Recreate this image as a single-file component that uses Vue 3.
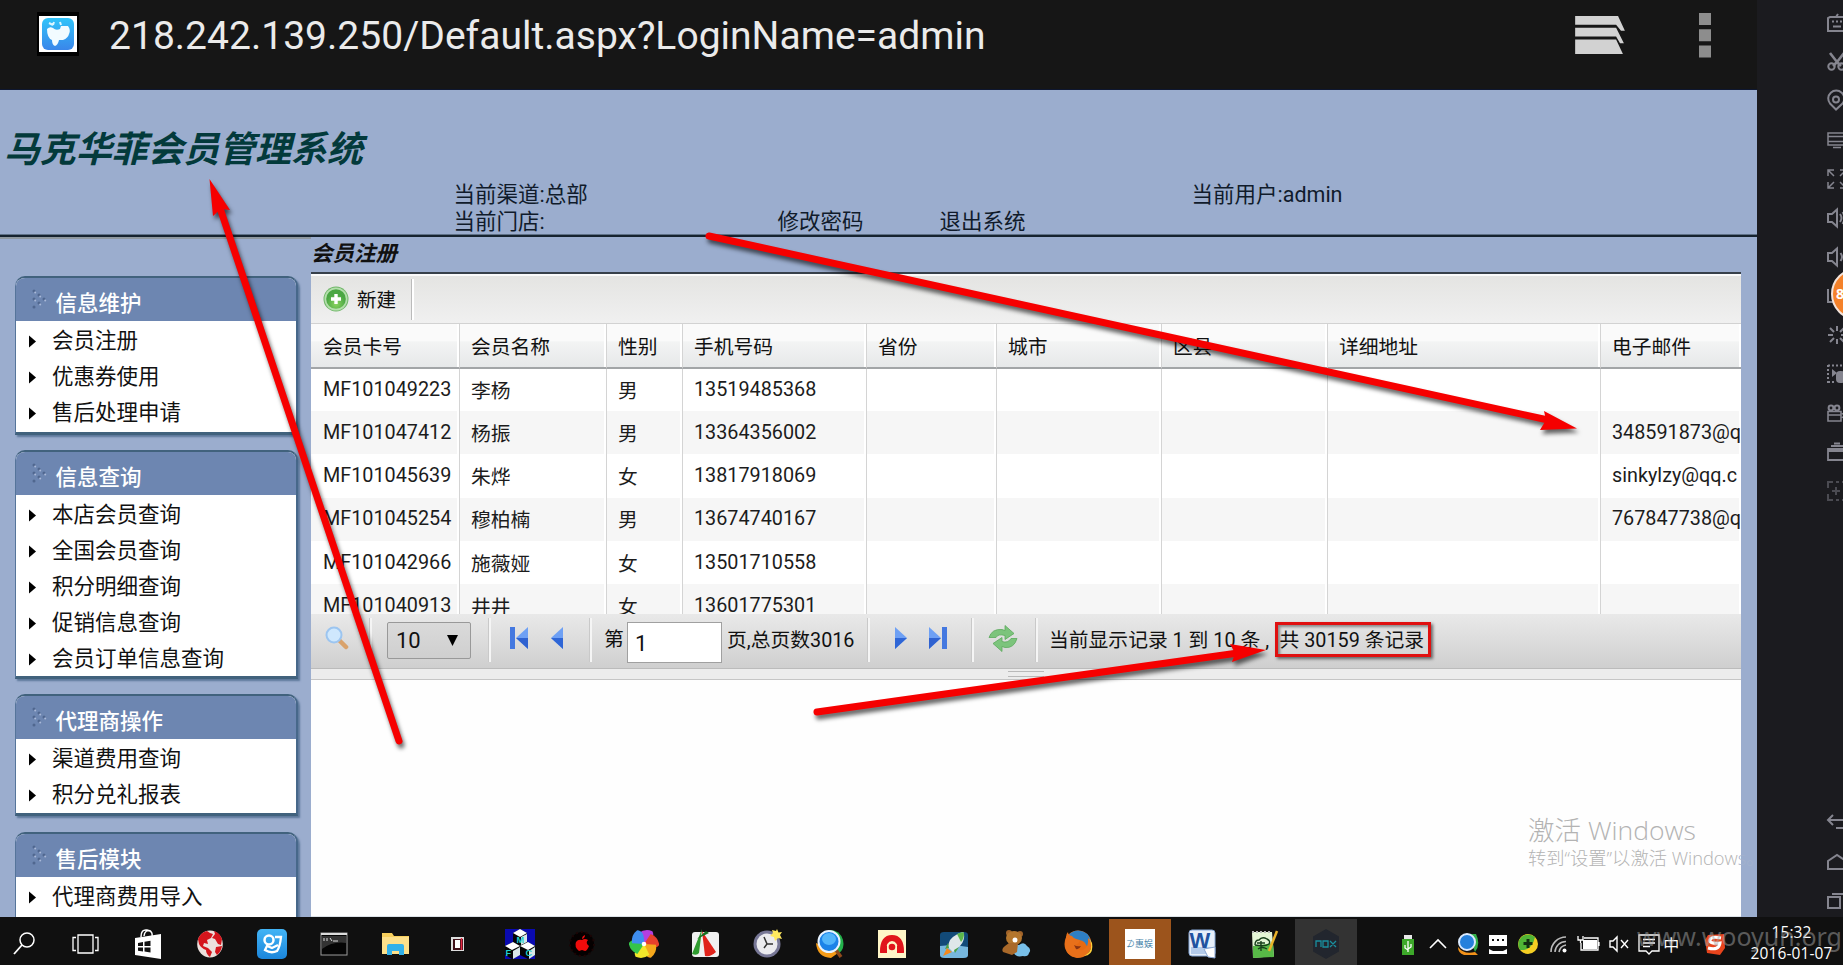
<script setup>
const panels = [
  { title: '信息维护', cls: 'p-one', items: ['会员注册', '优惠券使用', '售后处理申请'] },
  { title: '信息查询', cls: 'p-two', items: ['本店会员查询', '全国会员查询', '积分明细查询', '促销信息查询', '会员订单信息查询'] },
  { title: '代理商操作', cls: 'p-three', items: ['渠道费用查询', '积分兑礼报表'] },
  { title: '售后模块', cls: 'p-four', items: ['代理商费用导入'] },
]
const columns = ['会员卡号', '会员名称', '性别', '手机号码', '省份', '城市', '区县', '详细地址', '电子邮件']
const rows = [
  ['MF101049223', '李杨', '男', '13519485368', '', '', '', '', ''],
  ['MF101047412', '杨振', '男', '13364356002', '', '', '', '', '348591873@q'],
  ['MF101045639', '朱烨', '女', '13817918069', '', '', '', '', 'sinkylzy@qq.c'],
  ['MF101045254', '穆柏楠', '男', '13674740167', '', '', '', '', '767847738@q'],
  ['MF101042966', '施薇娅', '女', '13501710558', '', '', '', '', ''],
  ['MF101040913', '井井', '女', '13601775301', '', '', '', '', ''],
]
const petals = ['#b43fe0', '#e8402c', '#f5a81c', '#f3e72a', '#35c44a', '#3f8ef0']
</script>

<template>
  <div class="screen">
    <div class="main">
      <div class="device">
        <header class="urlbar">
          <svg class="favicon" viewBox="0 0 42 44">
            <rect width="42" height="44" fill="#000" />
            <rect x="2" y="4" width="38" height="36" fill="#fff" />
            <rect x="5" y="6" width="32" height="32" rx="6" fill="url(#fav)" />
            <defs><linearGradient id="fav" x2="0" y2="1"><stop offset="0" stop-color="#30c4fa" /><stop offset="1" stop-color="#3a86ea" /></linearGradient></defs>
            <path d="M10 17q3-3 6-1 3 3 7 1l1-3 7 0q3 4 1 8-1 4-6 6l-4 0q-1 5-4 6-3-1-3-6-5-2-5-11z" fill="#f2fbff" />
            <path d="M12 11l4 2M17 10l-1 3M23 10l1 3" stroke="#d9f5ff" stroke-width="2" />
          </svg>
          <span class="url">218.242.139.250/Default.aspx?LoginName=admin</span>
          <svg class="tabs" viewBox="0 0 52 40">
            <path d="M0 0H44L51 15H47L42 9H0zM0 12H42L50 28H46L42 21H0zM0 24H42L49 39H0z" fill="#d2d2d2" />
          </svg>
          <svg class="dots" viewBox="0 0 12 45"><path d="M0 0h12v12H0zM0 16.300h12v12H0zM0 32.500h12v12H0z" fill="#8d8d8d" /></svg>
        </header>

        <section class="banner">
          <h1>马克华菲会员管理系统</h1>
          <div class="info">
            <span>当前渠道:总部</span><span></span><span></span><span>当前用户:admin</span>
            <span>当前门店:</span><span>修改密码</span><span>退出系统</span><span></span>
          </div>
        </section>

        <div class="body">
          <aside class="side">
            <div v-for="p in panels" :key="p.title" class="panel" :class="p.cls">
              <div class="phead">
                <svg viewBox="0 0 15 20"><g fill="#50678f"><circle cx="2" cy="2" r="1.500" /><circle cx="2" cy="10" r="1.500" /><circle cx="2" cy="18" r="1.500" /><circle cx="7" cy="6" r="1.500" /><circle cx="7" cy="14" r="1.500" /><circle cx="12" cy="10" r="1.500" /></g><g fill="#a9b9d8"><circle cx="3.200" cy="3.500" r="1" /><circle cx="3.200" cy="11.500" r="1" /><circle cx="8.200" cy="7.500" r="1" /><circle cx="8.200" cy="15.500" r="1" /><circle cx="13.200" cy="11.500" r="1" /></g></svg>
                {{ p.title }}
              </div>
              <ul><li v-for="i in p.items" :key="i"><svg viewBox="0 0 8 12"><path d="M1 0L8 6L1 12z" /></svg>{{ i }}</li></ul>
            </div>
          </aside>

          <main class="content">
            <h2>会员注册</h2>
            <div class="toolbar">
              <svg class="plus" viewBox="0 0 26 26">
                <defs><radialGradient id="gp" cy=".75"><stop offset="0" stop-color="#8ad35f" /><stop offset="1" stop-color="#4ba744" /></radialGradient></defs>
                <circle cx="13" cy="13" r="12.500" fill="#6fb668" /><circle cx="13" cy="13" r="11.500" fill="#b5dfad" /><circle cx="13" cy="13" r="9.800" fill="url(#gp)" />
                <path d="M13 8v10M8 13h10" stroke="#fff" stroke-width="3.400" />
              </svg>
              <span>新建</span><i></i>
            </div>
            <div class="grid ghead"><div v-for="c in columns" :key="c">{{ c }}</div></div>
            <div class="rows">
              <div v-for="r in rows" :key="r[0]" class="grid row"><div v-for="(c, k) in r" :key="k">{{ c }}</div></div>
            </div>
            <div class="pager">
              <svg class="mag" viewBox="0 0 24 24">
                <path d="M14 14l7 7" stroke="#d9a26b" stroke-width="4.500" stroke-linecap="round" />
                <circle cx="9" cy="9" r="7.500" fill="#cfe8fd" stroke="#9cc5f0" stroke-width="2" />
              </svg>
              <i class="s1"></i>
              <div class="select"><span>10</span><svg viewBox="0 0 11 11"><path d="M0 0H11L5.500 11z" /></svg></div>
              <i class="s2"></i>
              <svg class="first" viewBox="0 0 20 22"><path d="M1 0h5v22H1z" fill="#4478e0" /><path d="M19 0v22L7 11z" fill="#6ea0f4" /><path d="M19 11v11L7 11z" fill="#2f62d0" /></svg>
              <svg class="prev" viewBox="0 0 12 22"><path d="M12 0v22L0 11z" fill="#6ea0f4" /><path d="M12 11v11L0 11z" fill="#2f66d6" /></svg>
              <i class="s3"></i>
              <span class="di">第</span><div class="pnum">1</div><span class="total">页,总页数3016</span>
              <i class="s4"></i>
              <svg class="next" viewBox="0 0 12 22"><path d="M0 0v22L12 11z" fill="#6ea0f4" /><path d="M0 11v11L12 11z" fill="#2f66d6" /></svg>
              <svg class="last" viewBox="0 0 20 22"><path d="M13 0h5v22h-5z" fill="#4478e0" /><path d="M0 0v22L12 11z" fill="#6ea0f4" /><path d="M0 11v11L12 11z" fill="#2f62d0" /></svg>
              <i class="s5"></i>
              <svg class="refresh" viewBox="0 0 30 26">
                <path d="M1 12Q4 3 14 4L17 5V0L26 8L17 14V10Q10 8 8 12z" fill="#7cc47c" stroke="#5aa95c" stroke-width=".8" />
                <path d="M29 13Q26 23 17 22L14 21V26L5 18L14 12V16Q20 18 23 13z" fill="#7cc47c" stroke="#5aa95c" stroke-width=".8" />
              </svg>
              <i class="s6"></i>
              <span class="shown">当前显示记录 1 到 10 条 ,</span><span class="count">共 30159 条记录</span>
            </div>
            <div class="split"><b></b></div>
            <div class="blank"></div>
          </main>
        </div>
      </div>

      <aside class="nox">
        <div class="tools">
          <svg viewBox="0 0 20 20"><path d="M3 4h14a2 2 0 0 1 2 2v10a2 2 0 0 1-2 2H1V5zM9 4l2-3M5 8.500h2M9 8.500h2M13 8.500h2M6 13.500h8" /></svg>
          <svg viewBox="0 0 20 20"><path d="M3 1l7 9 7-9M10 10l-4 4M10 10l4 4" stroke-width="2.600" /><circle cx="4.500" cy="14.500" r="3.200" /><circle cx="14.500" cy="14.500" r="3.200" /></svg>
          <svg viewBox="0 0 20 20"><path d="M9 18.500L3 12.500a8 8 0 1 1 12.500 0z" /><circle cx="9" cy="8.500" r="3" /></svg>
          <svg viewBox="0 0 20 20"><path d="M1 3h18v12H1zM1 6.500h18M1 11.500h18M6 17.500h8" stroke-width="1.500" /></svg>
          <svg viewBox="0 0 20 20"><path d="M7 1H1v6M1 1l6 6M13 1h6v6M19 1l-6 6M1 13v6h6M1 19l6-6M19 13v6h-6M19 19l-6-6" stroke-width="1.500" /></svg>
          <svg viewBox="0 0 20 20"><path d="M1 6h4l5-4.500v17L5 14H1zM13 6q3 4 0 8M15.500 4q4 6 0 12" /></svg>
          <svg viewBox="0 0 20 20"><path d="M1 6h4l5-4.500v17L5 14H1zM13.500 6q3 4 0 8" /></svg>
          <svg viewBox="0 0 20 20"><path d="M1 3v13h10" /></svg>
          <svg viewBox="0 0 20 20"><path d="M10 1v5M10 14v5M1 10h5M14 10h5M3 3l4 4M17 3l-4 4M3 17l4-4M17 17l-4-4" /></svg>
          <svg viewBox="0 0 20 20"><path d="M1 1v18M1 1.500h18M1 18h8" stroke-dasharray="2 2" /><path d="M5 5l5 4-5 4z" class="f" stroke="none" /><rect x="9" y="7" width="9" height="12" rx="4" class="f" stroke="none" /></svg>
          <svg viewBox="0 0 20 20"><path d="M1 8.500h13V18H1zM1 12h13M15 11l5-2v7l-5-2" stroke-width="1.600" /><circle cx="4" cy="5" r="2.400" /><circle cx="10" cy="5" r="2.400" /></svg>
          <svg viewBox="0 0 20 20"><path d="M1 7h18v11H1zM1 9h18M4 4h12M7 1.500h6" stroke-width="1.800" /></svg>
          <svg viewBox="0 0 20 20" class="dim"><path d="M1 7V1h5M9 1h3M15 1h4v6M1 13v6h5M9 19h3M15 19h4v-6M9 6v8M5 10h8" /></svg>
        </div>
        <div class="navs">
          <svg viewBox="0 0 20 20"><path d="M6 2L1 7l5 5M1 7h17v8H9" /></svg>
          <svg viewBox="0 0 20 20"><path d="M1 17V9l9-6 9 6v8z" /></svg>
          <svg viewBox="0 0 20 20"><path d="M1 6h12v11H1zM5 3h13v10" /></svg>
        </div>
        <div class="bubble">8</div>
      </aside>
    </div>

    <footer class="taskbar">
      <div class="apps">
        <span><svg viewBox="0 0 30 30"><circle cx="18" cy="11" r="7" fill="none" stroke="#fff" stroke-width="1.500" /><path d="M13 16L5 25" stroke="#fff" stroke-width="1.800" /></svg></span>
        <span><svg viewBox="0 0 30 30"><path d="M7 6h15v18H7zM5 8.500H2v13h3M24 8.500h3v13h-3" fill="none" stroke="#fff" stroke-width="1.300" /></svg></span>
        <span><svg viewBox="0 0 30 30"><path d="M2 9L28 5V30L2 26z" fill="#fff" /><path d="M8 8q0-8 6-7t5 6M11 7q1-7 7-5" fill="none" stroke="#fff" stroke-width="1.500" /><path d="M5 14l5-1v4H5zM11.500 12.800l6-1V17h-6zM5 18.500h5v4l-5-.8zM11.500 18.500h6v5l-6-1z" fill="#111" /></svg></span>
        <span><svg viewBox="0 0 30 30"><ellipse cx="15" cy="15" rx="12.800" ry="13.500" fill="#ece0dc" /><path d="M3 10q3-7 9-8l3 2 3 1-2 4-4 2 1 4-4-1-1 3 5 2 4 4-2 5q-4-3-4-7-5-2-7-6zM19 2q6 2 8 8l-1 6-3-1-3-5-3-1 3-4zM21 18l6-1q-1 6-5 9l-2-3z" fill="#d4151c" /></svg></span>
        <span><svg viewBox="0 0 30 30"><rect width="30" height="30" rx="5" fill="url(#blu)" /><defs><linearGradient id="blu" x2="0" y2="1"><stop offset="0" stop-color="#42b4f5" /><stop offset="1" stop-color="#1b86dc" /></linearGradient></defs><circle cx="12" cy="11" r="4.500" fill="none" stroke="#fff" stroke-width="2.500" /><path d="M18 8h6q-1 10-4 14-6 3-12-1l2-4 5 2 6-3" fill="none" stroke="#fff" stroke-width="2.300" /></svg></span>
        <span><svg viewBox="0 0 30 30"><rect x="2" y="4" width="26" height="22" fill="#050505" stroke="#9b9b9b" /><path d="M2 5h26" stroke="#ddd" stroke-width="2" /><path d="M3 7h24v7Q14 12 3 20z" fill="#333" /><path d="M5 9v3M8 9v3M11 9l2 3M14 12h5" stroke="#ddd" /></svg></span>
        <span><svg viewBox="0 0 30 30"><path d="M1 4h10l2 3h15v18H1z" fill="#f7cf5c" /><path d="M1 8h27v17H1z" fill="#fde08a" /><path d="M6 26V17q0-2 2-2h13q2 0 2 2v9h-5v-4h-7v4z" fill="#32b1ea" /></svg></span>
        <span><svg viewBox="0 0 30 30"><rect x="8" y="8" width="13" height="14" fill="#ddd" /><rect x="10" y="10" width="10" height="11" fill="#401018" /><rect x="12" y="11" width="5" height="8" fill="#fff" /><path d="M18.500 9v12" stroke="#e32742" stroke-width="1.500" /></svg></span>
        <span><svg viewBox="0 0 30 30"><path fill="#0a0ab0" d="M0 0h30v30H0z" /><path d="M15 0l7 4v9l8 4v9l-7 4-8-4-8 4-7-4v-9l8-4V4z" fill="#050505" /><path d="M15 0l7 4-7 4-7-4zM8 13l7 4-8 4-7-4zM23 13l7 4-7 4-8-4z" fill="#fff" /><path d="M22 5v8l-6 3V8zM15 18v8l-7 4v-8zM30 18v8l-6 4v-8z" fill="#d8e6e6" /></svg><b class="ml m1">M</b><b class="ml m2">F</b><b class="ml m3">C</b></span>
        <span><svg viewBox="0 0 30 30"><circle cx="15" cy="15" r="12" fill="#050000" stroke="#1c0505" stroke-width="2" stroke-dasharray="2 3" /><path d="M15 11q3-2 6 0-3 3 1 6-2 5-4 5l-3-1-3 1q-5-4-3-9 2-3 6-2zM15 10q0-3 3-4 0 3-3 4" fill="#f00b0b" /></svg></span>
        <span><svg viewBox="0 0 30 30"><g transform="translate(15 15)"><path v-for="(c, k) in petals" :key="c" d="M0 0L-9-8Q-5-15 3-15Q9-10 0 0" :fill="c" :transform="`rotate(${k * 60 + 22})`" /><circle r="2.300" fill="#fff" /></g></svg></span>
        <span><svg viewBox="0 0 30 30"><rect x="1" y="3" width="27" height="25" rx="3" fill="#f0f0f0" /><path d="M11 0L1 25q5 2 7-1z" fill="#2f9b2f" /><path d="M11 2L25 23q-5 5-11 4z" fill="#e0231b" /><path d="M6 10L15 2l3 2z" fill="#166f20" /></svg></span>
        <span><svg viewBox="0 0 30 30"><circle cx="14" cy="15" r="13.500" fill="#777796" /><circle cx="14" cy="15" r="10.500" fill="#ebebef" /><path d="M11 8l3 7-3 4M14 15h6" fill="none" stroke="#333" stroke-width="1.500" /><path d="M24 0l1.500 3.500L29 3l-2 3 2 4-4-1-3 3-1-4-4-1 3-3-1-3 4 1z" fill="#ffe95e" /></svg></span>
        <span><svg viewBox="0 0 30 30"><path d="M15 1q10 0 13 10 2 9-4 13L14 20z" fill="#23b14b" /><path d="M1 14q1 14 15 15l7-5z" fill="#f49b18" /><path d="M21 21l5 7" stroke="#8f4a1c" stroke-width="3.500" /><circle cx="14" cy="12.500" r="10.500" fill="#1c83e8" stroke="#e8f3ff" stroke-width="2" /><ellipse cx="14" cy="10" rx="7" ry="6" fill="#53b6fa" /></svg></span>
        <span><svg viewBox="0 0 30 30"><path fill="#fff6c8" d="M1 1h28v28H1z" /><path d="M3 23q0-17 12-17t12 17h-6q0-11-6-11T9 23z" fill="#e1151c" /><path d="M4 17h6v7H3zM20 17h6l1 7h-7z" fill="#e1151c" /><circle cx="15" cy="18" r="3.300" fill="#e1151c" /></svg></span>
        <span><svg viewBox="0 0 30 30"><path d="M1 6q0-3 4-3h20q4 0 4 3v20q0 3-4 3H5q-4 0-4-3z" fill="#124a78" /><path d="M1 17q14-2 28 1v8q0 3-5 3H6q-5 0-5-3z" fill="#77b7dd" /><path d="M9 18Q10 9 17 6q7-4 8-2 1 8-4 13l-7 6z" fill="#dfe7e9" /><path d="M18 5q6-3 7-1 0 6-3 9z" fill="#5db84c" /><path d="M9 14l-3 6 4-1zM20 18l-4 6-1-3z" fill="#4ca342" /><path d="M8 19l5 4-9 4z" fill="#f58a1c" /></svg></span>
        <span><svg viewBox="0 0 30 30"><path d="M12 21q1-6 6-5 5-4 8 1 5 3 2 7-1 4-6 3-9 2-10-6z" fill="#78bfe8" /><circle cx="8" cy="4" r="3" fill="#a0632a" /><circle cx="19" cy="5" r="3" fill="#a0632a" /><ellipse cx="13" cy="9" rx="8" ry="7" fill="#b4762d" /><path d="M8 14l9 0-1 9-5 3-9-3q-2-3 2-6z" fill="#a9692a" /><circle cx="14" cy="11" r="2.500" fill="#fff" /></svg></span>
        <span><svg viewBox="0 0 30 30"><circle cx="15" cy="15" r="13.500" fill="#e56a14" /><path d="M5 7q3-5 10-5.500Q26 2 28 13l-3 8q-2-10-9-10l-5-1z" fill="#2e7fc4" /><path d="M3 8q0-3 2-5 0 3 4 4 2 3 8 4-1 4-5 5 2 6 8 5 6-3 5-12 4 4 3 8-2 12-14 12Q2 27 2 15z" fill="#e8701a" /><path d="M26 9q6 12-5 18 10-1 8-13z" fill="#ffd23a" /><path d="M11 16q3 2 7 1-2 4-5 3z" fill="#8a3413" /></svg></span>
        <span class="hot"><em>⊅惠娱</em></span>
        <span><svg viewBox="0 0 30 30"><rect x="2" y="1" width="26" height="26" rx="3" fill="#e7effa" stroke="#87a9d8" /><path d="M4 18h22v7H4z" fill="#b4cbea" /><path d="M17 20l11-2v11l-7-1z" fill="#fff" stroke="#88a5d2" /></svg><b class="w">W</b></span>
        <span><svg viewBox="0 0 30 30"><path d="M3 3h20l2 24-21 2z" fill="#e4f5d6" /><path d="M4 17l20-3 1 14-21 1z" fill="#58b947" /><path d="M6 16q0-5 4-5 3-4 8-1 4 2 2 5-4 3-14 1M9 20q4-3 9 0M12 12v10M8 14h8" fill="none" stroke="#173f1b" stroke-width="1.400" /><path d="M28 2L20 22" stroke="#ebb32a" stroke-width="2.500" /><path d="M3 3h20" stroke="#b6b6b6" stroke-width="2" stroke-dasharray="2 2" /></svg></span>
        <span class="on"><svg viewBox="0 0 30 30"><path d="M15 0L28 7.500V22.500L15 30L2 22.500V7.500z" fill="#22262e" /><path d="M5 18v-6h5v6M12 12h5v6h-5zM19 12l6 6M25 12l-6 6" fill="none" stroke="#1a8f9e" stroke-width="1.300" /></svg></span>
      </div>
      <div class="tray">
        <svg viewBox="0 0 24 24"><path d="M8 3h8v5H8z" fill="#e8e8e8" /><rect x="6" y="7" width="12" height="16" fill="#3da82a" /><path d="M12 9v11M9 13v3l3 2M15 12v3l-3 2" stroke="#fff" fill="none" stroke-width="1.300" /></svg>
        <svg viewBox="0 0 24 24"><path d="M4 16L12 8l8 8" fill="none" stroke="#fff" stroke-width="1.600" /></svg>
        <svg viewBox="0 0 24 24"><path d="M12 2h8q5 10-1 18z" fill="#33b04a" /><path d="M2 15q6 8 17 5l3 3H8q-6-2-6-8z" fill="#f2921a" /><circle cx="11" cy="10" r="8" fill="#2580dc" stroke="#dbeaff" stroke-width="2" /></svg>
        <svg viewBox="0 0 24 24"><path d="M3 3h18v11H3zM3 17l4 2h10l4-2v5H3z" fill="#fff" /><path d="M6 8h2M11 8h2M16 8h2" stroke="#111" stroke-width="2" /></svg>
        <svg viewBox="0 0 24 24"><circle cx="12" cy="12" r="10" fill="#f5cf23" /><path d="M19 5A10 10 0 0 0 4 18Q16 19 19 5" fill="#50b536" /><path d="M12 7v9M7.500 11.500h9" stroke="#122f12" stroke-width="3" /></svg>
        <svg viewBox="0 0 24 24"><path d="M5 20A15 15 0 0 1 20 5M9 20A11 11 0 0 1 20 9.500M13 20q1-6 7-7" fill="none" stroke="#bbb" stroke-width="1.600" /><circle cx="18.500" cy="18.500" r="2" fill="#fff" /></svg>
        <svg viewBox="0 0 24 24"><rect x="6" y="8" width="14" height="9" fill="#fff" /><path d="M7 6h14v12H4V11M22 10v4M1 4v4h5V4M3.500 8v3" fill="none" stroke="#fff" stroke-width="1.300" /></svg>
        <svg viewBox="0 0 24 24"><path d="M3 9h3l4-4v14l-4-4H3zM14 8l7 8M21 8l-7 8" fill="none" stroke="#fff" stroke-width="1.400" /></svg>
        <svg viewBox="0 0 24 24"><path d="M2 3h20v16h-7l-3 3-3-3H2zM6 7.500h12M6 11h12M6 14.500h7" fill="none" stroke="#fff" stroke-width="1.300" /></svg>
        <span class="ime">中</span>
        <svg class="sg" viewBox="0 0 24 24"><path d="M5 3l16-1 1 14-5 7-13-2L2 8z" fill="#e8441c" /><path d="M18 6q-10-2-11 2t10 3q-1 8-12 5" fill="none" stroke="#fff" stroke-width="3" /></svg>
      </div>
      <div class="clock"><span>15:32</span><span>2016-01-07</span></div>
    </footer>

    <div class="activate"><p class="a1">激活 Windows</p><p class="a2">转到“设置”以激活 Window<s>s。</s></p></div>
    <div class="redbox"></div>
    <svg class="arrows" viewBox="0 0 1843 965">
      <g stroke="#f60000" stroke-width="7" stroke-linecap="round" fill="#f60000">
        <path d="M399 741L220 208" /><path d="M709 236L1548 420" /><path d="M817 712L1238 653" />
      </g>
      <g fill="#f60000"><path d="M209.500 179L230 210L221 209L213 216z" /><path d="M1577 428.500L1544 411L1546 420L1540 430z" /><path d="M1266 650L1230 644L1235 653L1232 662z" /></g>
    </svg>
    <div class="mark">www.wooyun.org</div>
  </div>
</template>

<style>
html, body { margin: 0; overflow: hidden; background: #111; }
</style>
<style scoped>
* { box-sizing: border-box; }
.screen { position: relative; width: 1843px; height: 965px; overflow: hidden; font-family: Roboto, "Noto Sans CJK SC", sans-serif; color: #111; display: flex; flex-direction: column; }
svg { display: block; flex: none; }
h1, h2, p, ul { margin: 0; padding: 0; }
.main { height: 917px; display: flex; }
.device { width: 1757px; background: #9badce; overflow: hidden; display: flex; flex-direction: column; }
.urlbar { height: 90px; flex: none; background: #161616; border-bottom: 1px solid #0e1730; display: flex; align-items: flex-start; }
.favicon { width: 42px; height: 44px; margin: 12px 0 0 37px; }
.url { margin: 9px 0 0 30px; width: 1466px; flex: none; line-height: 54px; font-size: 39px; color: #ebebeb; white-space: nowrap; letter-spacing: .02px; }
.tabs { width: 51px; height: 39px; margin-top: 16px; }
.dots { width: 12px; height: 45px; margin: 13px 0 0 73px; }
.banner { height: 147px; flex: none; border-bottom: 2px solid #16232f; box-shadow: inset 0 -1px #5f7187; }
h1 { padding: 34px 0 0 4px; line-height: 52px; height: 91px; font-size: 36px; font-weight: 700; font-style: italic; color: #033a3b; letter-spacing: -.15px; }
.info { display: grid; grid-template-columns: 324px 162px 252px 1fr; grid-auto-rows: 27px; line-height: 27px; padding-left: 453.500px; font-size: 21.500px; color: #101b2b; }
.body { flex: 1; display: flex; min-height: 0; }
.side { width: 311px; padding: 37px 0 0 15px; border-top: 2px solid #8f989f; display: flex; flex-direction: column; }
.panel { width: 283px; flex: none; border: 1px solid #55749a; border-top: 2px solid #41627d; border-bottom: 3px solid #41627d; border-right: 2px solid #47688a; border-radius: 10px 10px 0 0; background: #fff; overflow: hidden; margin-bottom: 16px; box-shadow: 2px 2px 2px #5c789a; }
.p-one { height: 159px; margin-bottom: 15px; }
.p-two { height: 229px; margin-bottom: 15px; }
.p-three { height: 122px; }
.p-four { height: 130px; }
.phead { height: 43px; background: #6d86b1; color: #fff; font-size: 21.500px; display: flex; align-items: center; padding: 3px 0 0 16px; font-weight: 500; }
.phead svg { width: 15px; height: 20px; margin: -5px 8.500px 0 0; }
li { list-style: none; display: flex; align-items: center; height: 36.200px; font-size: 21.500px; padding: 0 0 2px 12px; white-space: nowrap; }
li svg { width: 8px; height: 13px; margin: 6px 16px 0 0; }
.content { width: 1430px; display: flex; flex-direction: column; overflow: hidden; }
h2 { height: 37px; flex: none; border-bottom: 2px solid #37404a; font-size: 21.500px; line-height: 33px; font-style: italic; font-weight: 700; padding-left: 0; }
.toolbar { height: 50px; flex: none; border-top: 2px solid #fafafa; border-bottom: 1px solid #d2d2d2; background: linear-gradient(#e4e4e2, #f0f0f0); display: flex; align-items: center; font-size: 19.500px; padding-left: 12px; }
.plus { width: 26px; height: 26px; margin: -1px 9px 0 0; }
.toolbar span { width: 54px; margin: -2px 0 0 -1px; }
.toolbar i { width: 3px; height: 41px; border-left: 1px solid #bbb; border-right: 2px solid #fff; }
.grid { display: grid; grid-template-columns: 149px 147px 76px 184px 130px 165px 166px 273px 140px; font-size: 19.800px; }
.grid div { padding-left: 11px; white-space: nowrap; overflow: hidden; border-right: 1px solid #d4d4d4; box-shadow: inset -2px 0 #fff; display: flex; align-items: center; }
.grid div:first-child { padding-left: 12px; }
.ghead { height: 45px; flex: none; overflow: hidden; }
.ghead div { background: linear-gradient(#fafafa 0, #fafafa 40%, #f3f4f4 41%, #e6e8e9); border-bottom: 2px solid #a2a5a7; }
.rows { height: 245px; flex: none; overflow: hidden; background: #fff; }
.row { height: 43.300px; color: #1c1c1c; }
.row:first-child { height: 42px; }
.row div { background: #fff; padding-bottom: 1px; }
.row:nth-child(even) div { background: #f6f6f6; }
.grid div:last-child { border-right: 0; }
.pager { height: 55px; flex: none; background: linear-gradient(#e9e9e9, #cfcfcf); border-bottom: 1px solid #bbb; display: flex; align-items: flex-start; font-size: 19.800px; padding-left: 14px; line-height: 24px; }
.pager i { width: 3px; height: 44px; margin-top: 4px; border-left: 1px solid #c9c9c9; border-right: 2px solid #f5f5f5; flex: none; }
.mag { width: 24px; height: 24px; margin: 12px 20px 0 0; }
.select { width: 84px; height: 37px; margin: 8px 17px 0 15px; flex: none; background: linear-gradient(#dadada, #cfcfcf); border: 1px solid #999; border-radius: 2px; font-size: 22px; display: flex; align-items: center; justify-content: space-between; padding: 0 12px 0 8px; }
.select svg { width: 11px; height: 11px; }
.first { width: 20px; height: 22px; margin: 13px 0 0 18px; }
.prev { width: 12px; height: 22px; margin: 13px 26px 0 22px; }
.di { margin: 14px 3px 0 12px; width: 20px; flex: none; }
.pnum { width: 95px; height: 41px; flex: none; margin: 8px 0 0; background: #fff; border: 1px solid #a0a0a0; font-size: 22px; line-height: 41px; padding-left: 7px; }
.total { margin: 15px 0 0 5px; width: 140px; flex: none; }
.next { width: 12px; height: 22px; margin: 13px 0 0 25px; }
.last { width: 20px; height: 22px; margin: 13px 22px 0 22px; }
.refresh { width: 30px; height: 27px; margin: 11px 17px 0 14px; }
.shown { margin: 15px 0 0 11px; width: 230.500px; flex: none; white-space: nowrap; }
.count { margin-top: 15px; white-space: nowrap; }
.split { height: 11px; flex: none; background: #ececec; border-bottom: 1px solid #c5c5c5; padding: 2px 0 0 697px; }
.split b { display: block; width: 36px; height: 6px; border: solid #b9b9b9; border-width: 1px 0; }
.blank { flex: 1; background: #fefefe; border-bottom: 1px solid #dde3e8; }
.nox { position: relative; flex: 1; background: #1b1b1f; display: flex; flex-direction: column; justify-content: space-between; padding: 3px 0 0 70px; overflow: hidden; }
.tools, .navs { display: flex; flex-direction: column; }
.nox svg { width: 20px; height: 20px; margin: 9.500px 0; fill: none; stroke: #85858f; stroke-width: 2; overflow: visible; }
.nox .f { fill: #85858f; }
.nox .dim { stroke: #4b4b52; }
.navs { margin-bottom: -3px; }
.bubble { position: absolute; left: 74px; top: 268px; width: 52px; height: 52px; border-radius: 50%; background: #f5822a; border: 2px solid #f3e3da; color: #fff; font: bold 14px/48px "Noto Sans", sans-serif; padding-left: 3px; }
.taskbar { height: 48px; background: #101010; display: flex; overflow: hidden; }
.apps { display: flex; margin-left: -7.500px; width: 1401px; flex: none; }
.apps > span { position: relative; width: 62px; flex: none; display: flex; align-items: center; justify-content: center; padding-top: 5px; }
.apps svg { width: 30px; height: 30px; }
.apps .hot { background: linear-gradient(#9c541c, #9c541c) 0 2px no-repeat; }
.apps .on { background: linear-gradient(#333, #333) 0 2px no-repeat; }
.hot em { width: 30px; height: 30px; background: #fff; color: #4a86ab; font: 9px/29px "Noto Sans CJK SC", sans-serif; text-align: center; white-space: nowrap; }
.ml { position: absolute; color: #1fd0d0; font: bold 9px/10px "Liberation Sans", sans-serif; }
.m1 { left: 28px; top: 18px; } .m2 { left: 17px; top: 31px; } .m3 { left: 37px; top: 31px; }
.w { position: absolute; left: 19px; top: 12px; color: #2152a0; font: bold 22px/24px "Liberation Sans", sans-serif; }
.tray { display: flex; align-items: center; padding: 5px 0 0 2px; width: 337px; flex: none; }
.tray svg { width: 24px; height: 24px; margin-right: 6.200px; }
.ime { color: #fff; font-size: 16px; width: 16px; margin: 0 24px 0 -4px; }
.clock { color: #fff; font: 15.500px/21px "Open Sans", "Noto Sans", sans-serif; letter-spacing: .1px; display: flex; flex-direction: column; align-items: center; width: 124px; flex: none; margin-left: -1px; padding: 5px 0 0 0; }
.activate { position: absolute; left: 1528px; top: 812px; width: 229px; overflow: hidden; white-space: nowrap; color: #b3b3b3; font-family: "Open Sans", "Noto Sans CJK SC", sans-serif; font-weight: 300; }
.a1 { font-size: 26.500px; line-height: 36px; }
.a2 { font-size: 18.300px; line-height: 20px; }
.a2 s { text-decoration: none; color: #a3b2cd; }
.redbox { position: absolute; left: 1275px; top: 622px; width: 156px; height: 35px; border: 3px solid #e01010; box-shadow: 2px 2px 3px #0008, inset 2px 2px 3px #0006; }
.arrows { position: absolute; left: 0; top: 0; width: 1843px; height: 965px; filter: drop-shadow(2px 4px 2px rgba(0, 0, 0, .6)); }
.mark { position: absolute; left: 1637px; top: 916px; color: rgba(165, 165, 165, .5); font: 25px/40px "Noto Sans", sans-serif; }
</style>
